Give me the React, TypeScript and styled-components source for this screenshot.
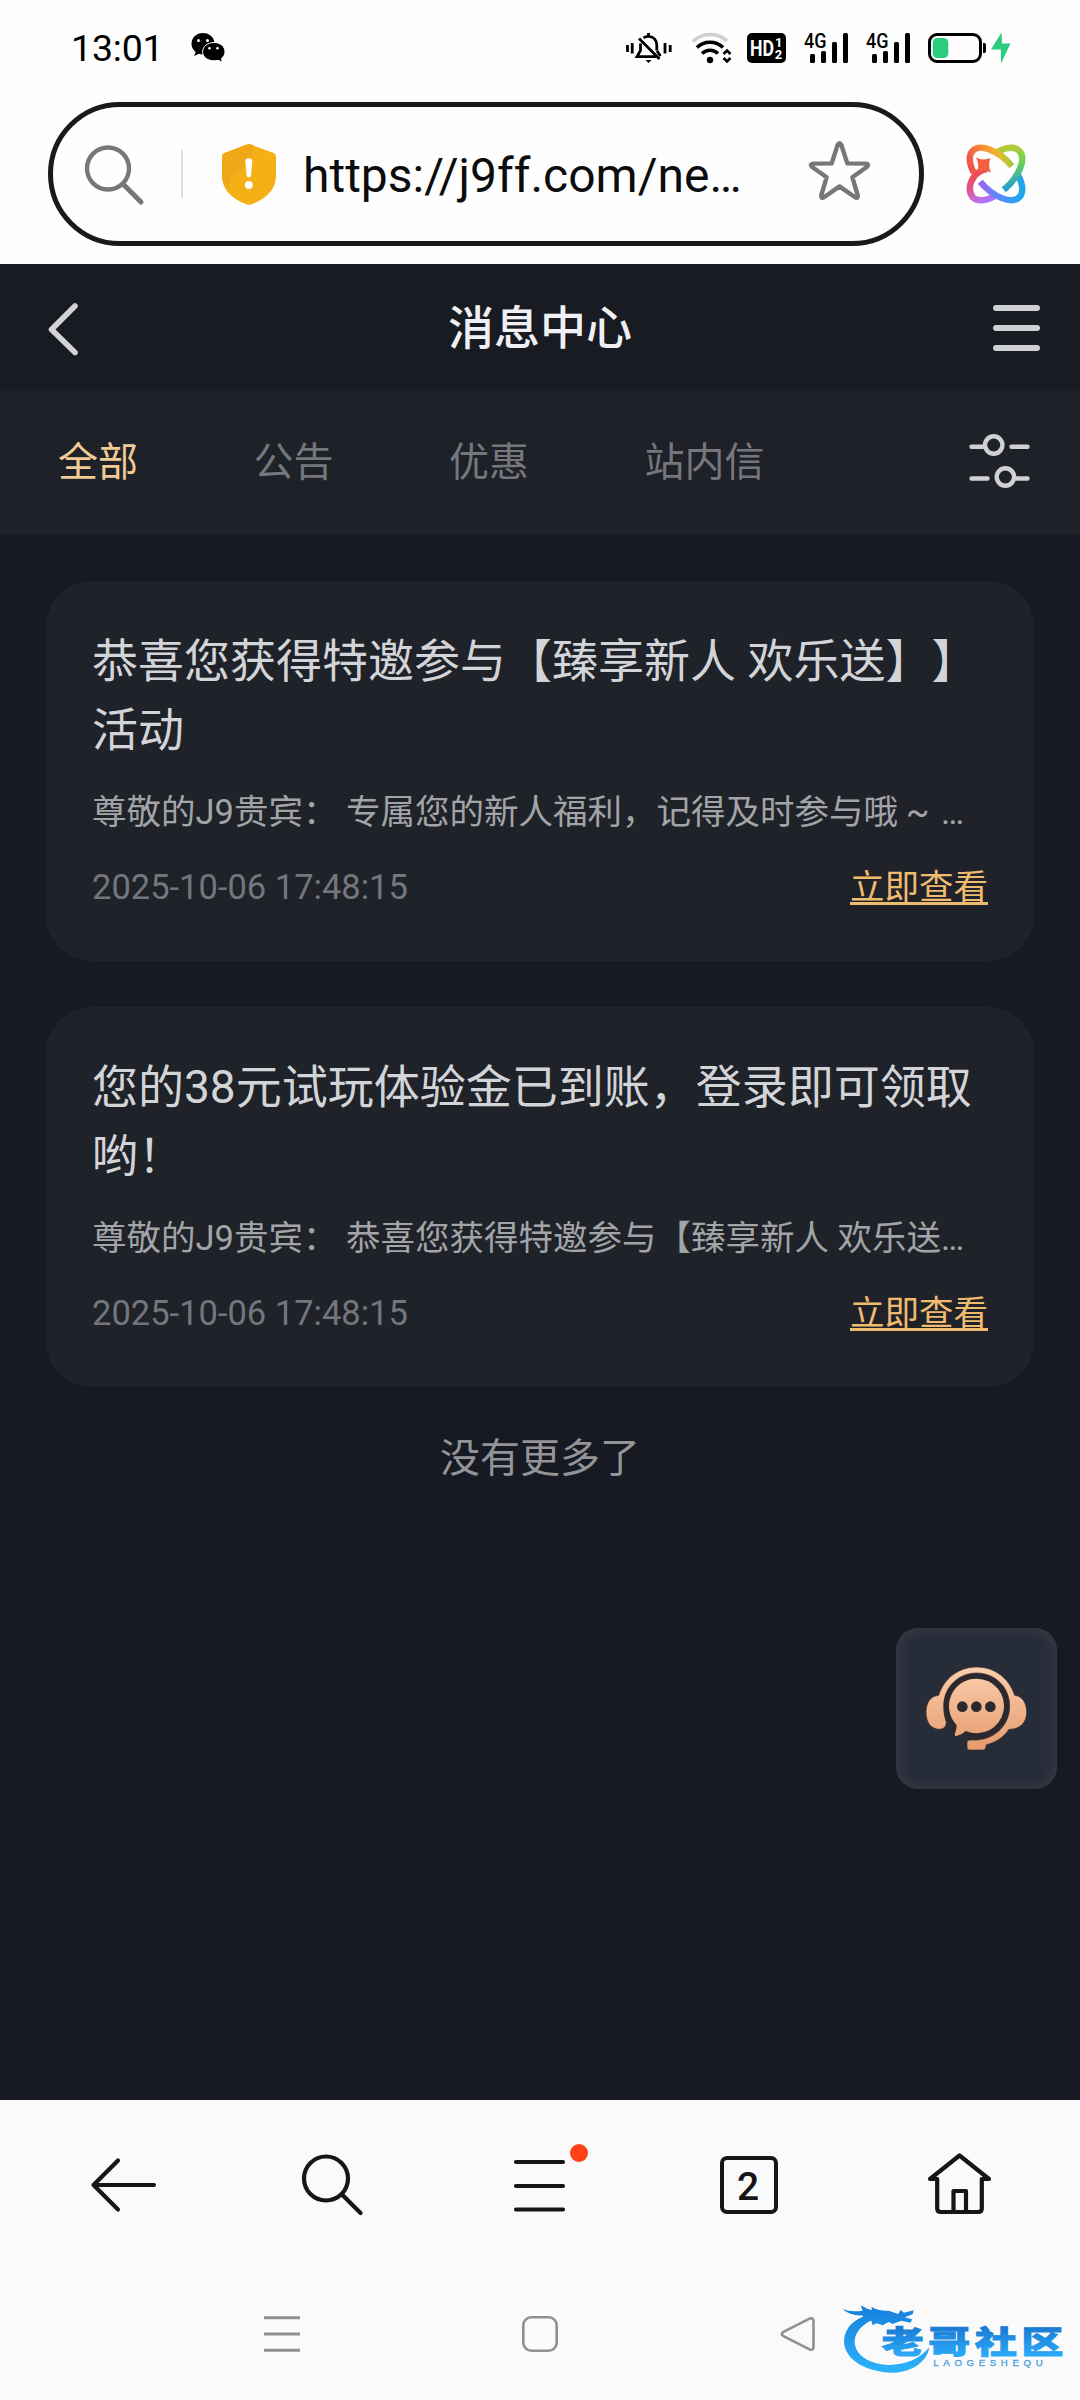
import React from "react";
import styled, { createGlobalStyle } from "styled-components";

const GlobalStyle = createGlobalStyle`
  * { box-sizing: border-box; }
  body {
    margin: 0;
    background: #171a22;
    font-family: Roboto, "Noto Sans CJK SC", sans-serif;
    text-spacing-trim: space-all;
  }
  svg { display: block; flex: none; overflow: visible; }
`;

const Screen = styled.div`
  position: relative;
  width: 1080px;
  height: 2400px;
  display: flex;
  flex-direction: column;
  overflow: hidden;
`;

/* ---------- status bar ---------- */

const StatusBar = styled.header`
  height: 96px;
  flex: none;
  display: flex;
  align-items: center;
  padding: 0 69px 0 71px;
  background: #fefefe;
  color: #000;
`;

const Clock = styled.span`
  width: 120px;
  font-size: 37.5px;
  line-height: 44px;
  letter-spacing: -0.2px;
  white-space: nowrap;
`;

const StatusIcons = styled.div`
  display: flex;
  align-items: center;
  margin-left: auto;
`;

const IconSlot = styled.div<{ $gap?: number }>`
  margin-left: ${(p) => p.$gap ?? 0}px;
`;

/* ---------- address bar ---------- */

const AddressRow = styled.div`
  height: 168px;
  flex: none;
  display: flex;
  align-items: flex-start;
  padding: 6px 55px 0 48px;
  gap: 43px;
  background: #fefefe;
`;

const AddressPill = styled.div`
  width: 876px;
  height: 144px;
  display: flex;
  align-items: center;
  padding: 0 49px 0 32px;
  border: 5px solid #1a1a1a;
  border-radius: 72px;
`;

const PillDivider = styled.div`
  width: 2px;
  height: 48px;
  margin: 0 39px 0 38px;
  background: #dedede;
`;

const Url = styled.span`
  flex: 1;
  margin-left: 27px;
  padding-top: 3px;
  font-size: 48px;
  line-height: 60px;
  white-space: nowrap;
  color: #0c0c0c;
`;

const FavouriteSlot = styled.div`
  margin-top: -7px;
`;

const AssistantSlot = styled.div`
  margin-top: 43px;
`;

/* ---------- page ---------- */

const Page = styled.main`
  flex: 1;
  display: flex;
  flex-direction: column;
  background: #171a22;
`;

const PageHeader = styled.div`
  height: 127px;
  flex: none;
  display: flex;
  align-items: center;
  justify-content: space-between;
  padding: 0 40px 0 48px;
  background: #181b22;
`;

const HeaderSide = styled.div<{ $end?: boolean }>`
  width: 60px;
  display: flex;
  justify-content: ${(p) => (p.$end ? "flex-end" : "flex-start")};
  padding-top: ${(p) => (p.$end ? 0 : 3)}px;
`;

const PageTitle = styled.h1`
  margin: 0 8px 0 0;
  font-size: 46px;
  line-height: 60px;
  font-weight: 500;
  color: #f0f0f4;
`;

const MenuLines = styled.div`
  width: 47px;
  height: 46px;
  display: flex;
  flex-direction: column;
  justify-content: space-between;
`;

const MenuLine = styled.i`
  height: 6px;
  border-radius: 3px;
  background: #cfcfd6;
`;

const TabBar = styled.nav`
  height: 144px;
  flex: none;
  display: flex;
  align-items: center;
  gap: 115.5px;
  padding: 0 50px 0 58px;
  background: #1e2128;
`;

const Tab = styled.span<{ $active?: boolean }>`
  font-size: 40px;
  line-height: 56px;
  font-weight: 400;
  color: ${(p) => (p.$active ? "#f0cb95" : "#76767d")};
`;

const FilterSlot = styled.div`
  margin: -4px 0 0 auto;
`;

const MessageList = styled.section`
  display: flex;
  flex-direction: column;
  gap: 46px;
  padding: 46px 46px 0;
`;

const Card = styled.article`
  height: 380px;
  padding: 46px 46px 0;
  border-radius: 46px;
  background: #1f2229;
`;

const CardTitle = styled.h2`
  margin: 0;
  font-size: 46px;
  line-height: 69px;
  font-weight: 400;
  color: #d3d4d8;
`;

const CardText = styled.p`
  margin: 21px 0 0;
  font-size: 34.5px;
  line-height: 52px;
  white-space: nowrap;
  color: #a3a4a8;
`;

const Tilde = styled.span`
  display: inline-block;
  width: 1em;
  padding-left: 8px;
`;

const CardFooter = styled.div`
  display: flex;
  align-items: center;
  justify-content: space-between;
  margin-top: 23px;
  line-height: 52px;
`;

const DateText = styled.time`
  font-size: 34.5px;
  color: #75767d;
`;

const ViewLink = styled.a`
  font-size: 34.5px;
  color: #efbc6f;
  text-decoration: underline;
  text-decoration-thickness: 3px;
  text-underline-offset: 3px;
  text-decoration-skip-ink: none;
`;

const EndNote = styled.p`
  margin: 44px 0 0;
  text-align: center;
  font-size: 40px;
  line-height: 56px;
  color: #939498;
`;

const SupportButton = styled.button`
  position: absolute;
  left: 896px;
  top: 1628px;
  width: 161px;
  height: 161px;
  padding: 0;
  border: 0;
  border-radius: 22px;
  background: #272d38;
  box-shadow: inset 0 0 14px 2px rgba(120, 122, 140, 0.2);
`;

/* ---------- browser and system navigation ---------- */

const BrowserNav = styled.nav`
  height: 170px;
  flex: none;
  display: flex;
  align-items: center;
  padding: 0 20px;
  background: #fafafa;
`;

const NavItem = styled.div`
  flex: 1;
  display: flex;
  justify-content: center;
`;

const TabCount = styled.div`
  width: 58px;
  height: 58px;
  margin-left: 2px;
  display: flex;
  align-items: center;
  justify-content: center;
  padding-top: 3px;
  padding-right: 2px;
  border: 4px solid #161616;
  border-radius: 7px;
  font-size: 39px;
  line-height: 50px;
  font-weight: 500;
  color: #161616;
`;

const SystemNav = styled.nav`
  height: 130px;
  flex: none;
  display: flex;
  align-items: flex-start;
  justify-content: center;
  gap: 222px;
  padding-top: 46px;
  background: #fafafa;
`;

const Watermark = styled.div`
  position: absolute;
  right: 0;
  bottom: 0;
`;

/* ---------- icons ---------- */

const WeChatIcon = () => (
  <svg width="34" height="30" viewBox="0 0 34 30">
    <path d="M12 0C5 0 .5 5 .5 10.8c0 3.4 1.6 6.2 4.2 8.2L3 23l5-2.2c1.2.4 2.600.6 4 .6 7 0 11.500-5 11.500-10.700S19 0 12 0z" fill="#000" />
    <path d="M23 9.500c-6.300 0-11.400 3.900-11.400 9.300 0 5.300 5.100 9 11.400 9 1.500 0 2.800-.2 4-.6l4.500 2-1.100-3.600c2.200-1.700 3.600-4 3.600-6.800 0-5.400-4.700-9.300-11-9.300z" fill="#000" stroke="#fefefe" strokeWidth="1" />
    <g fill="#fefefe">
      <circle cx="7.500" cy="7.500" r="1.500" /><circle cx="16.500" cy="7.500" r="1.500" />
      <circle cx="18.500" cy="15.300" r="1.300" /><circle cx="26.500" cy="15.300" r="1.300" />
    </g>
  </svg>
);

const BellOffIcon = () => (
  <svg width="46" height="30" viewBox="0 0 46 30" fill="none" stroke="#000" strokeWidth="2.800">
    <path d="M1.500 12v7M6.200 10v10.500M39 10v10.500M44.200 12v7" />
    <path d="M17.500 4.800C19 3.800 20.500 3.400 22.500 3.400c5 0 8.300 3.800 8.300 8.600v5.500M14.500 10.500v7L11 23.700h19M22.500 0v4M13 5.500l20.500 20.500M31 18l3.500 5" />
    <path d="M19.500 27h6l-3 3z" fill="#000" stroke="none" />
  </svg>
);

const WifiIcon = () => (
  <svg width="40" height="30" viewBox="0 0 40 30" fill="none" strokeWidth="3.500">
    <path d="M1 8.500C10-.8 26-.8 35 8" stroke="#cfcfcf" />
    <path d="M5 14.500C12 7.500 24 7.500 31 14.500M10 20.500C14.500 16 21.500 16 26 20.500" stroke="#000" />
    <circle cx="18" cy="27" r="3.200" fill="#000" />
    <path d="M31.500 21l3.500-3.500 3.500 3.500M31.500 25l3.500 3.500 3.500-3.500" stroke="#000" strokeWidth="2.600" />
  </svg>
);

const HdIcon = () => (
  <svg width="39" height="30" viewBox="0 0 39 30" fontFamily="Roboto, sans-serif" fontWeight="700" fill="#fff">
    <rect width="39" height="30" rx="5" fill="#000" />
    <text x="3" y="23" fontSize="22" textLength="24" lengthAdjust="spacingAndGlyphs">HD</text>
    <text x="28" y="14" fontSize="13">1</text>
    <text x="27.800" y="26" fontSize="13">2</text>
  </svg>
);

const SignalIcon = () => (
  <svg width="44" height="30" viewBox="0 0 44 30" fill="#000">
    <text x="0" y="14.500" fontFamily="Roboto, sans-serif" fontSize="20" fontWeight="500" textLength="22.500" lengthAdjust="spacingAndGlyphs">4G</text>
    <rect x="6" y="21" width="5" height="9" rx="1.500" />
    <rect x="17" y="18" width="5" height="12" rx="1.500" />
    <rect x="28" y="9" width="5" height="21" rx="1.500" />
    <rect x="39" y="0" width="5" height="30" rx="1.500" />
  </svg>
);

const BatteryIcon = () => (
  <svg width="83" height="30" viewBox="0 0 83 30">
    <rect x="1.500" y="1.500" width="51" height="27" rx="7.500" fill="none" stroke="#000" strokeWidth="3" />
    <path d="M55 10h1.500q1.500 0 1.500 2v6q0 2-1.500 2H55z" fill="#000" />
    <rect x="4.800" y="5" width="15.500" height="20" rx="4.500" fill="#2bcd7c" />
    <path d="M73.500-.5L63 16.500h9.800L73 30.500 82.500 10.500h-8.500z" fill="#2bcd7c" />
  </svg>
);

const PillSearchIcon = () => (
  <svg width="58" height="59" viewBox="0 0 58 59" fill="none" stroke="#777" strokeWidth="4.400" strokeLinecap="round">
    <circle cx="23" cy="23.500" r="21" />
    <path d="M38.500 39.500l17.500 17.500" strokeWidth="5" />
  </svg>
);

const ShieldIcon = () => (
  <svg width="54" height="61" viewBox="0 0 54 61">
    <path d="M24.800.6Q27-.4 29.200.6L51 8.800Q54 10 54 13v19c0 13-9 22.500-24.500 28.300q-2.500 1-5 0C9 54.500 0 45 0 32V13q0-3 3-4.200z" fill="#f5b016" />
    <path d="M24.800.6Q27-.4 29.200.6L31 1.300C34 12 26 24 13 29 9 33 7 37 7 45 2.500 41 0 37 0 32V13q0-3 3-4.200z" fill="#efa51a" opacity=".75" />
    <path d="M23.300 17.500q0-3.300 3.500-3.300t3.500 3.300l-1.300 14q-.2 2-2.200 2t-2.200-2z" fill="#fff" />
    <circle cx="26.800" cy="41" r="3.900" fill="#fff" />
  </svg>
);

const StarIcon = () => (
  <svg width="61" height="60" viewBox="0 0 61 60" fill="none" stroke="#777" strokeWidth="4.400" strokeLinejoin="round">
    <path d="M28.700 3.800q1.800-3.300 3.600 0l6 18.600 18.800.2q3.400.6 1 3.200L43.400 36.300l5.400 18.200q.3 3.400-2.800 1.800L30.500 45.400 15 56.300q-3.100 1.600-2.800-1.800l5.400-18.200L2.900 25.800q-2.400-2.600 1-3.200l18.800-.2z" />
  </svg>
);

const AssistantIcon = () => (
  <svg width="58" height="58" viewBox="0 0 58 58" fill="none" strokeWidth="6.400">
    <defs>
      <linearGradient id="warm" gradientUnits="userSpaceOnUse" x1="3" y1="28" x2="45" y2="12">
        <stop offset="0" stopColor="#ee4b52" /><stop offset=".4" stopColor="#fb8437" />
        <stop offset=".75" stopColor="#f0b92a" /><stop offset="1" stopColor="#8ccd3c" />
      </linearGradient>
      <linearGradient id="leaf" gradientUnits="userSpaceOnUse" x1="32" y1="5" x2="42" y2="46">
        <stop offset="0" stopColor="#b5cb37" /><stop offset=".4" stopColor="#6cd455" />
        <stop offset="1" stopColor="#1c98dc" />
      </linearGradient>
      <linearGradient id="sky" gradientUnits="userSpaceOnUse" x1="13" y1="38" x2="52" y2="38">
        <stop offset="0" stopColor="#9a62ee" /><stop offset=".5" stopColor="#5b8cff" />
        <stop offset="1" stopColor="#22a5ec" />
      </linearGradient>
      <linearGradient id="rose" gradientUnits="userSpaceOnUse" x1="10" y1="24" x2="24" y2="54">
        <stop offset="0" stopColor="#f0483f" /><stop offset=".45" stopColor="#e0568e" />
        <stop offset=".8" stopColor="#c46bd8" /><stop offset="1" stopColor="#a874ff" />
      </linearGradient>
    </defs>
    <path d="M27.700 51.100A33 17-45 0 1 5.700 52.300Q-1 43 7.500 31 12 25.500 20 24" stroke="url(#rose)" />
    <path d="M13.200 36.800A33 17 45 0 0 52.300 52.300 33 17 45 0 0 51 30" stroke="url(#sky)" />
    <path d="M36.800 44.800A33 17-45 0 0 52.300 5.700 33 17-45 0 0 30.300 6.900" stroke="url(#leaf)" />
    <path d="M44.900 21.200A33 17 45 0 0 5.700 5.700 33 17 45 0 0 6.900 27.700" stroke="url(#warm)" />
    <path d="M9 12.500q7 3.500 14.500.5-3 6.500.5 14.500-7.500-3.500-14 .5 3-8-1-15.500z" fill="#f4603f" />
  </svg>
);

const BackChevron = () => (
  <svg width="30" height="52" viewBox="0 0 30 52" fill="none" stroke="#d2d2d8" strokeWidth="5.600" strokeLinecap="round" strokeLinejoin="round">
    <path d="M27 3L3.500 26.500 27 49.500" />
  </svg>
);

const FilterIcon = () => (
  <svg width="61" height="54" viewBox="0 0 61 54" fill="none" stroke="#d0d0d6" strokeWidth="4.400" strokeLinecap="round">
    <path d="M2.500 12.700h12M42.500 12.700h16M2.500 44.500h16M47.500 44.500h11" />
    <circle cx="24.700" cy="11" r="8.700" />
    <circle cx="36.400" cy="43" r="8.700" />
  </svg>
);

const HeadsetIcon = () => (
  <svg width="161" height="161" viewBox="108 84 483 483">
    <defs>
      <linearGradient id="peach" gradientUnits="userSpaceOnUse" x1="0" y1="200" x2="0" y2="450">
        <stop offset="0" stopColor="#fbcfae" /><stop offset="1" stopColor="#e59a6c" />
      </linearGradient>
    </defs>
    <circle cx="350" cy="318" r="92" fill="none" stroke="#2b292d" strokeWidth="22" />
    <path
      d="M236 286C252 235 296 201 350 201S448 235 464 286C486 288 500 308 500 336 500 366 482 388 447 388 432 411 408 428 379 434L377 444Q375 450 369 450H329Q321 450 321 442V428Q321 420 329 420H350C407 416 449 374 449 318 449 262 405 219 350 219S251 262 251 318C251 340 255 355 259 366Q259 386 240 388C212 388 198 366 198 336 198 308 212 288 236 286z"
      fill="url(#peach)" stroke="#34292a" strokeWidth="2"
    />
    <path d="M350 236a82 82 0 1 1-33 157q-10 11-27 15-8 1-5-8 5-14 5-25A82 82 0 0 1 350 236z" fill="url(#peach)" />
    <g fill="#2b292d">
      <circle cx="307" cy="320" r="16" /><circle cx="349" cy="320" r="16" /><circle cx="391" cy="320" r="16" />
    </g>
  </svg>
);

const NavSvg = ({ children }: { children: React.ReactNode }) => (
  <svg width="80" height="80" viewBox="0 0 80 80" fill="none" stroke="#161616" strokeWidth="4.200" strokeLinecap="round" strokeLinejoin="round">
    {children}
  </svg>
);

const WatermarkLogo = () => (
  <svg width="250" height="110" viewBox="0 0 750 330">
    <defs>
      <linearGradient id="wave" gradientUnits="userSpaceOnUse" x1="0" y1="50" x2="0" y2="248">
        <stop offset="0" stopColor="#1580dc" /><stop offset="1" stopColor="#2db4fb" />
      </linearGradient>
      <linearGradient id="word" gradientUnits="userSpaceOnUse" x1="0" y1="-78" x2="0" y2="8">
        <stop offset="0" stopColor="#1a7ad4" /><stop offset="1" stopColor="#2caafa" />
      </linearGradient>
    </defs>
    <g fill="url(#wave)">
      <path d="M132 88C82 108 60 150 84 186 120 236 240 244 298 172 290 226 225 253 178 248 92 242 40 200 42 150 46 112 72 88 112 76z" />
      <path d="M37 57Q62 68 98 62L92 46Q112 58 126 60L124 50Q146 64 176 62L205 72 212 60 222 68 251 61 248 73 224 82 246 88 242 98 214 92 188 102 176 96 158 106 140 100 128 106 124 92 104 88 96 76Q62 78 37 57z" />
    </g>
    <text
      transform="translate(155 190) scale(1.380 1)"
      fontFamily="'Noto Sans CJK SC', sans-serif" fontSize="91" fontWeight="900" letterSpacing="10.400"
      fill="url(#word)" stroke="url(#word)" strokeWidth="3"
    >老哥社区</text>
    <text x="310" y="229" fontFamily="'Liberation Sans', sans-serif" fontSize="29" textLength="328" fill="#4f9fe0" stroke="#4f9fe0" strokeWidth="1">LAOGESHEQU</text>
  </svg>
);

/* ---------- content ---------- */

const tabs = ["全部", "公告", "优惠", "站内信"];

const messages = [
  {
    title: "恭喜您获得特邀参与【臻享新人 欢乐送】】活动",
    text: <>尊敬的J9贵宾： 专属您的新人福利，记得及时参与哦<Tilde>~</Tilde> …</>,
    date: "2025-10-06 17:48:15",
  },
  {
    title: "您的38元试玩体验金已到账，登录即可领取哟！",
    text: <>尊敬的J9贵宾： 恭喜您获得特邀参与【臻享新人 欢乐送…</>,
    date: "2025-10-06 17:48:15",
  },
];

export default function App() {
  return (
    <Screen>
      <GlobalStyle />
      <StatusBar>
        <Clock>13:01</Clock>
        <WeChatIcon />
        <StatusIcons>
          <IconSlot><BellOffIcon /></IconSlot>
          <IconSlot $gap={20}><WifiIcon /></IconSlot>
          <IconSlot $gap={15}><HdIcon /></IconSlot>
          <IconSlot $gap={18}><SignalIcon /></IconSlot>
          <IconSlot $gap={18}><SignalIcon /></IconSlot>
          <IconSlot $gap={18}><BatteryIcon /></IconSlot>
        </StatusIcons>
      </StatusBar>

      <AddressRow>
        <AddressPill>
          <PillSearchIcon />
          <PillDivider />
          <ShieldIcon />
          <Url>https://j9ff.com/ne…</Url>
          <FavouriteSlot><StarIcon /></FavouriteSlot>
        </AddressPill>
        <AssistantSlot><AssistantIcon /></AssistantSlot>
      </AddressRow>

      <Page>
        <PageHeader>
          <HeaderSide><BackChevron /></HeaderSide>
          <PageTitle>消息中心</PageTitle>
          <HeaderSide $end>
            <MenuLines><MenuLine /><MenuLine /><MenuLine /></MenuLines>
          </HeaderSide>
        </PageHeader>
        <TabBar>
          {tabs.map((t, i) => <Tab key={t} $active={i === 0}>{t}</Tab>)}
          <FilterSlot><FilterIcon /></FilterSlot>
        </TabBar>
        <MessageList>
          {messages.map((m) => (
            <Card key={m.title}>
              <CardTitle>{m.title}</CardTitle>
              <CardText>{m.text}</CardText>
              <CardFooter>
                <DateText>{m.date}</DateText>
                <ViewLink>立即查看</ViewLink>
              </CardFooter>
            </Card>
          ))}
        </MessageList>
        <EndNote>没有更多了</EndNote>
      </Page>
      <SupportButton aria-label="客服"><HeadsetIcon /></SupportButton>

      <BrowserNav>
        <NavItem>
          <NavSvg><path d="M70 40H9.500M34 15.500L9.500 40 34 64.500" /></NavSvg>
        </NavItem>
        <NavItem>
          <NavSvg><circle cx="34" cy="33.500" r="22" /><path d="M50.500 50l18 18" /></NavSvg>
        </NavItem>
        <NavItem>
          <NavSvg>
            <path d="M16 17h47M16 41h47M16 64.500h47" />
            <circle cx="79" cy="8" r="9" fill="#ff4119" stroke="none" />
          </NavSvg>
        </NavItem>
        <NavItem><TabCount>2</TabCount></NavItem>
        <NavItem>
          <NavSvg>
            <path d="M43.500 10.500L14 34h7.200v29.500q0 3.500 3.500 3.500h37.600q3.500 0 3.500-3.500V34H73z" />
            <path d="M37.500 66V46h12.500v20" />
          </NavSvg>
        </NavItem>
      </BrowserNav>
      <SystemNav>
        <svg width="36" height="36" viewBox="0 0 36 36" stroke="#909090" strokeWidth="3">
          <path d="M0 1.700h36M0 18h36M0 34.300h36" />
        </svg>
        <svg width="36" height="36" viewBox="0 0 36 36" fill="none" stroke="#909090" strokeWidth="2.600">
          <rect x="1.300" y="1.300" width="33.400" height="33.400" rx="8" />
        </svg>
        <svg width="36" height="36" viewBox="0 0 36 36" fill="none" stroke="#909090" strokeWidth="2.600">
          <path d="M29.500 2.600L3.500 15.800q-3.500 2.200 0 4.400l26 13.200q4 1.300 4-2.700V5.300q0-4-4-2.700z" />
        </svg>
      </SystemNav>
      <Watermark><WatermarkLogo /></Watermark>
    </Screen>
  );
}
